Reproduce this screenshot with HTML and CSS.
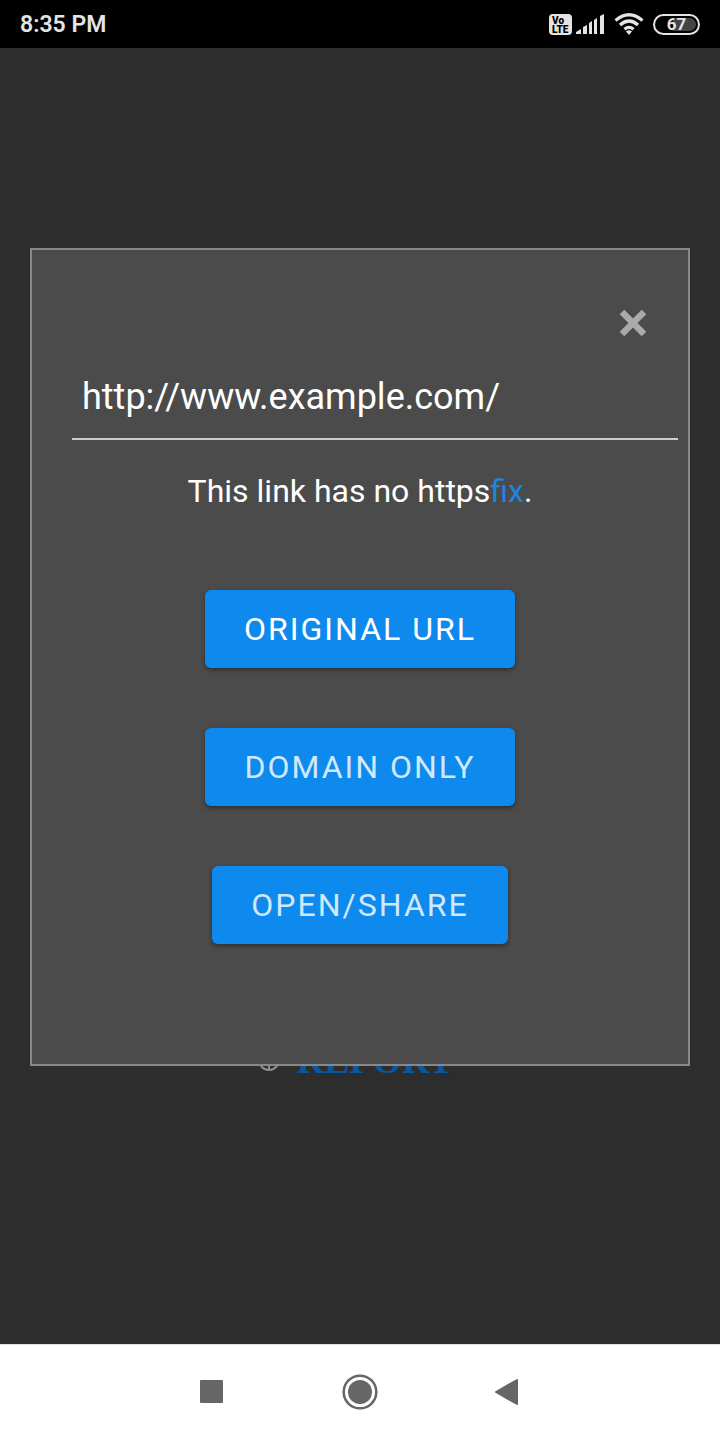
FILE: index.html
```html
<!DOCTYPE html>
<html lang="en">
<head>
<meta charset="utf-8">
<meta name="viewport" content="width=device-width, initial-scale=1">
<title>Link options</title>
<link rel="stylesheet" href="styles.css">
</head>
<body class="screen">
<header class="status">
  <time class="clock">8:35 PM</time>
  <div class="indicators">
    <span class="volte"><span>Vo</span><span>LTE</span></span>
    <svg class="signal" width="28" height="20" viewBox="0 0 28 20" aria-label="Signal"><path fill="#e4e4e4" d="M0 20v-2l5-3v5zM7 13l4-2v9H7zM13 9l3-2v13h-3zM18 6l3-2v16h-3zM24 2l4-2v20h-4z"/></svg>
    <svg class="wifi" width="30" height="22" viewBox="0 0 30 22" fill="none" stroke="#e4e4e4" stroke-width="3.200" aria-label="Wi-Fi"><path d="M1.500 7.500Q15-4 28.500 7.500M6 12Q15 4 24 12M10.500 16.300Q15 12.500 19.500 16.300"/><path d="M12 18.500Q15 16 18 18.500L15 22z" fill="#e4e4e4" stroke="none"/></svg>
    <span class="battery"><span class="charge">67</span></span>
  </div>
</header>
<main class="page">
  <a class="report" href="#report">
    <svg width="22" height="22" viewBox="0 0 22 22" fill="none" stroke="#8d8d8d" stroke-width="2" aria-hidden="true"><circle cx="11" cy="11" r="10"/><path d="M11 1v20M2 15h18"/></svg>
    <span>REPORT</span>
  </a>
  <section class="dialog" role="dialog" aria-label="Link options">
    <button class="close" type="button" aria-label="Close"><svg width="28" height="28" viewBox="0 0 28 28" stroke="#aaa" stroke-width="6.500" aria-hidden="true"><path d="M3 3l22 22M25 3L3 25"/></svg></button>
    <input class="url" type="text" aria-label="URL" value="http://www.example.com/">
    <p class="notice">This link has no https<a class="fix" href="#fix">fix</a>.</p>
    <div class="actions">
      <button class="action active" type="button">ORIGINAL URL</button>
      <button class="action" type="button">DOMAIN ONLY</button>
      <button class="action" type="button">OPEN/SHARE</button>
    </div>
  </section>
</main>
<nav class="navbar" aria-label="System navigation">
  <button class="key" type="button" aria-label="Recent apps"><svg width="36" height="36" viewBox="0 0 36 36"><rect x="6" y="6" width="23" height="23" rx="1" fill="#666"/></svg></button>
  <button class="key" type="button" aria-label="Home"><svg width="36" height="36" viewBox="0 0 36 36"><circle cx="18" cy="18" r="16.300" fill="none" stroke="#666" stroke-width="2.500"/><circle cx="18" cy="18" r="12" fill="#666"/></svg></button>
  <button class="key" type="button" aria-label="Back"><svg width="36" height="36" viewBox="0 0 36 36"><path d="M6 18L27 6v24z" fill="#666" stroke="#666" stroke-width="2" stroke-linejoin="round"/></svg></button>
</nav>
</body>
</html>
```
FILE: styles.css
```css
* {
  box-sizing: border-box;
}

.screen {
  display: flex;
  flex-direction: column;
  min-height: 100vh;
  margin: 0;
  background: #2d2d2d;
  font-family: Roboto, "Liberation Sans", sans-serif;
}

button {
  padding: 0;
  border: 0;
  background: none;
  font-family: inherit;
  cursor: pointer;
}

svg {
  display: block;
}

.status {
  display: flex;
  align-items: center;
  justify-content: space-between;
  height: 48px;
  padding: 0 20px;
  background: #000;
  color: #e4e4e4;
}

.clock {
  padding-top: 2px;
  font-size: 23px;
  font-weight: 600;
  line-height: 28px;
}

.indicators {
  display: flex;
  align-items: center;
}

.volte {
  display: flex;
  flex-direction: column;
  width: 23px;
  height: 21px;
  margin-right: 4px;
  padding: 2px 2px 0 3px;
  border-radius: 4px;
  background: #e4e4e4;
  color: #000;
  font-size: 10px;
  font-weight: 900;
  line-height: 9px;
}

.signal {
  margin-right: 10px;
}

.wifi {
  margin-right: 9px;
}

.battery {
  display: flex;
  width: 47px;
  height: 21px;
  padding: 2px;
  border: 2px solid #e4e4e4;
  border-radius: 11px;
}

.charge {
  flex: 1;
  border-radius: 8px;
  background: linear-gradient(90deg, #000 40%, #444 40%);
  font-size: 17px;
  font-weight: 700;
  line-height: 13px;
  text-align: center;
}

.page {
  position: relative;
  flex: 1;
  padding: 986px 0 40px;
}

.report {
  display: flex;
  align-items: center;
  justify-content: center;
  gap: 16px;
  padding-right: 8px;
  color: #07589c;
  font-family: "Liberation Serif", serif;
  font-size: 38px;
  font-weight: 700;
  line-height: 52px;
  text-decoration: none;
}

.dialog {
  position: absolute;
  top: 200px;
  right: 30px;
  left: 30px;
  display: flex;
  flex-direction: column;
  padding: 59px 10px 120px 40px;
  border: 2px solid #888;
  background: #4b4b4b;
}

.close {
  align-self: flex-end;
  margin-right: 31px;
}

.url {
  width: 100%;
  height: 84px;
  margin-top: 19px;
  padding: 0 10px;
  border: 0;
  border-bottom: 2px solid #ccc;
  border-radius: 0;
  outline: 0;
  background: transparent;
  color: #fff;
  font-family: inherit;
  font-size: 36px;
}

.notice {
  margin: 30px 30px 0 0;
  color: #fff;
  font-size: 32px;
  line-height: 42px;
  text-align: center;
}

.fix {
  color: #1c86dc;
  text-decoration: none;
}

.actions {
  display: flex;
  flex-direction: column;
  align-items: center;
  gap: 60px;
  margin: 78px 30px 0 0;
}

.action {
  height: 78px;
  padding: 0 39px;
  border-radius: 6px;
  background: #0e8aee;
  box-shadow: 0 2px 4px rgba(0, 0, 0, 0.4);
  color: #cfe8fb;
  font-size: 32px;
  letter-spacing: 2px;
}

.active {
  color: #fff;
}

.navbar {
  display: flex;
  align-items: center;
  justify-content: center;
  gap: 112px;
  height: 96px;
  padding: 0 1px 1px 0;
  border-top: 1px solid #e2e2e2;
  background: #fff;
}
```
